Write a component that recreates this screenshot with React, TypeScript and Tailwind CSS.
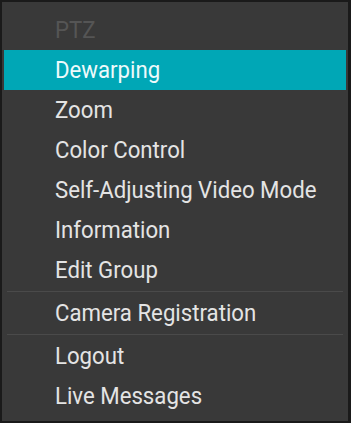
import React from 'react'

type Item = { label: string; disabled?: boolean; active?: boolean; divider?: boolean }

const items: Item[] = [
  { label: 'PTZ', disabled: true },
  { label: 'Dewarping', active: true },
  { label: 'Zoom' },
  { label: 'Color Control' },
  { label: 'Self-Adjusting Video Mode' },
  { label: 'Information' },
  { label: 'Edit Group', divider: true },
  { label: 'Camera Registration', divider: true },
  { label: 'Logout' },
  { label: 'Live Messages' },
]

export default function App() {
  return (
    <div className="w-[351px] h-[423px] bg-[#1a1a1a] pt-[2px] pl-[2px] pr-[3px] pb-[2px]">
      <div
        className="h-full bg-[#393939] px-[2px] pt-[8px]"
        style={{ fontFamily: 'Roboto, "Liberation Sans", sans-serif' }}
      >
        <ul className="flex flex-col">
          {items.map((item) => (
            <li key={item.label} className="flex flex-col">
              <div
                className={
                  item.active
                    ? 'h-[40px] flex items-center pl-[51px] bg-[#00a7b6] text-[#eefafb]'
                    : item.disabled
                      ? 'h-[40px] flex items-center pl-[51px] text-[#555555]'
                      : 'h-[40px] flex items-center pl-[51px] text-[#e4e4e4]'
                }
              >
                <span className="inline-block origin-left scale-x-[0.925] text-[24px] leading-none whitespace-nowrap">
                  {item.label}
                </span>
              </div>
              {item.divider && <div className="mx-[3px] my-[1px] h-px bg-[#4a4a4a]" />}
            </li>
          ))}
        </ul>
      </div>
    </div>
  )
}
